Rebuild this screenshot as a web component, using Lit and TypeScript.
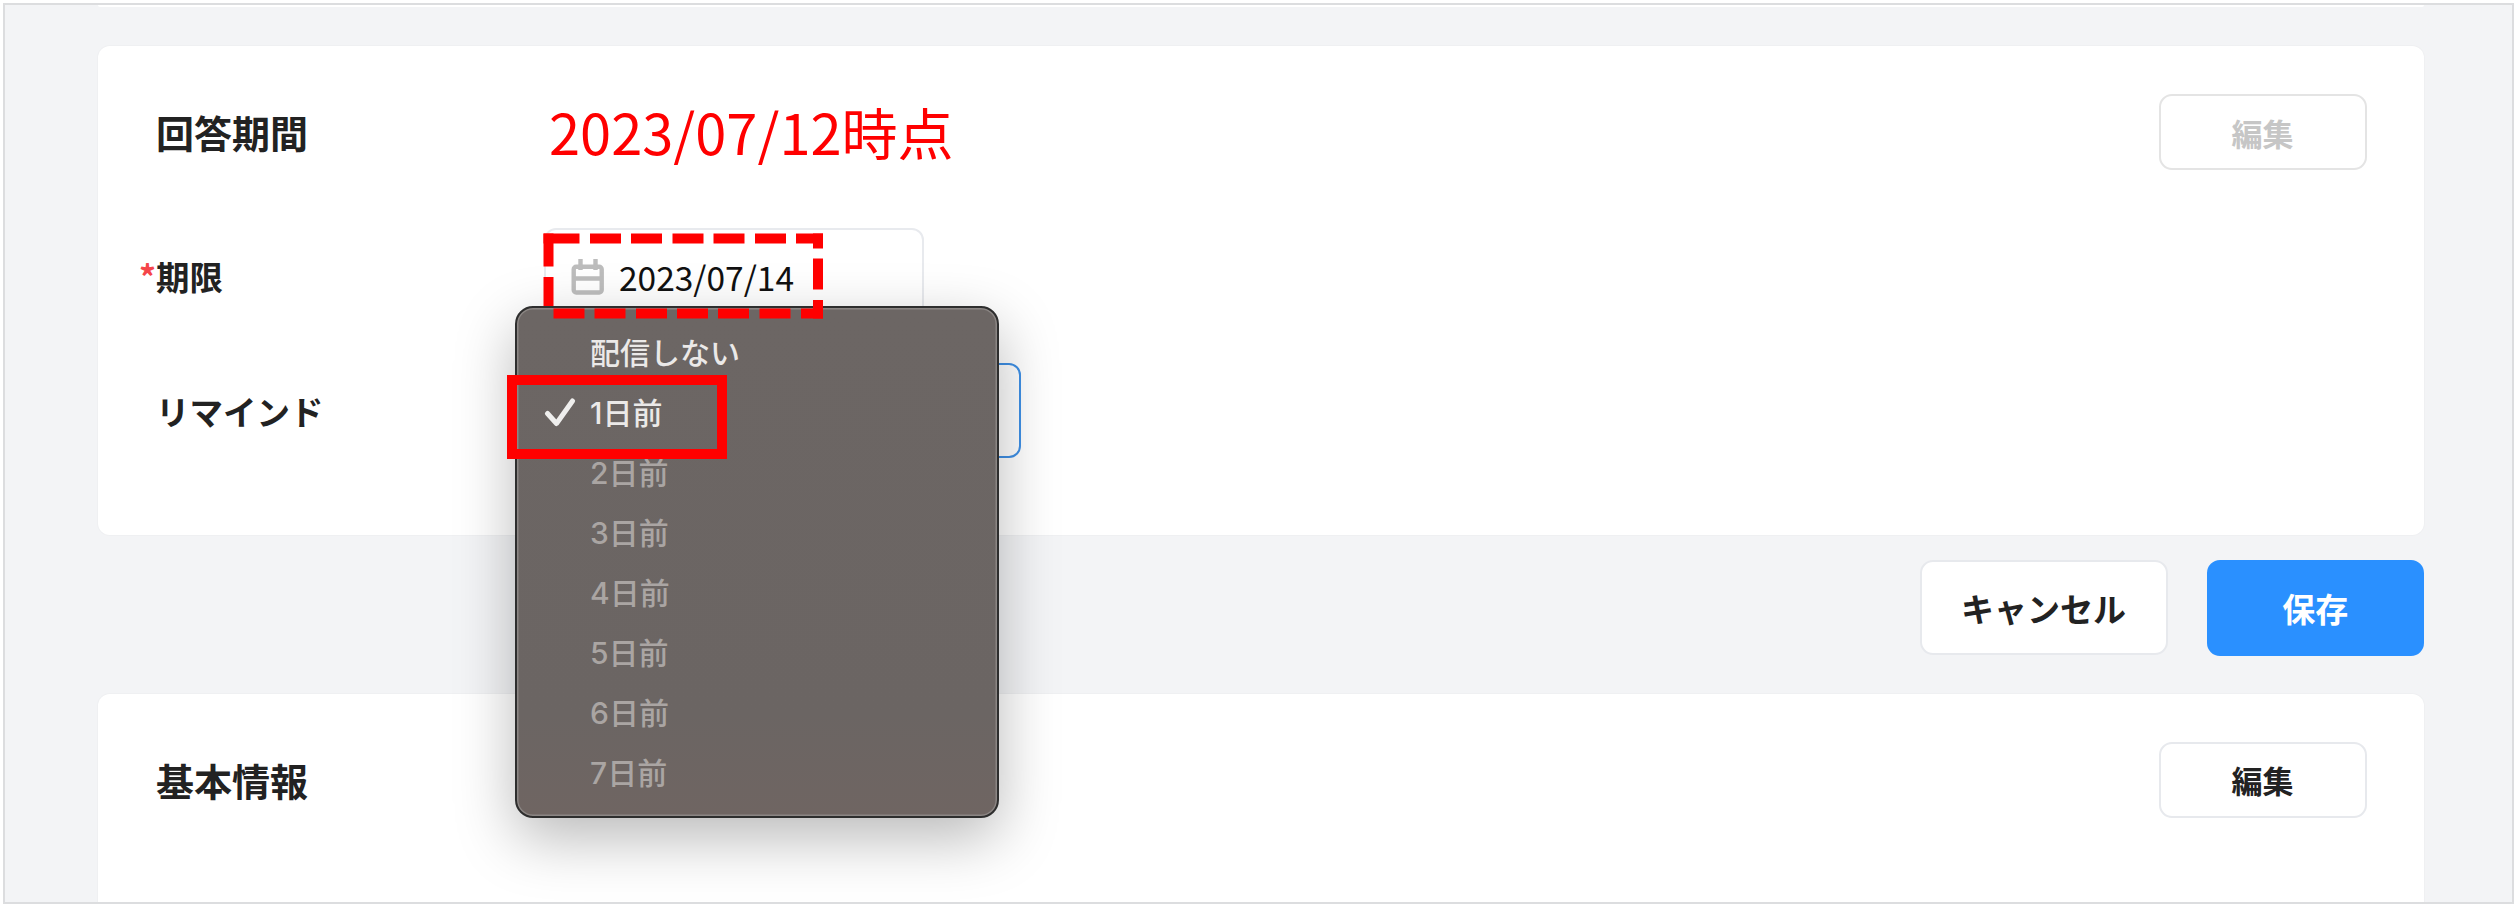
import { LitElement, html, css, svg } from "lit";
import { customElement } from "lit/decorators.js";

const JP = `"Noto Sans CJK JP", "Noto Sans", sans-serif`;
const OPTIONS = ["配信しない", "1日前", "2日前", "3日前", "4日前", "5日前", "6日前", "7日前"];

// Dashed annotation rectangle: [x, y, w, h] per dash, as measured in the reference.
const DASHES: [number, number, number, number][] = [
  [543.5, 233.5, 36, 10], [590, 233.5, 31, 10], [631, 233.5, 31, 10], [672.5, 233.5, 31, 10],
  [713.5, 233.5, 31, 10], [755, 233.5, 31, 10], [796, 233.5, 27, 10],
  [813, 233.5, 10, 15], [813, 258.5, 10, 31], [813, 300, 10, 18.5],
  [543.5, 233.5, 10, 33], [543.5, 277, 10, 29],
  [553.5, 308.5, 31, 10], [594.5, 308.5, 31, 10], [636, 308.5, 31, 10], [677, 308.5, 31, 10],
  [718, 308.5, 31, 10], [759.5, 308.5, 31, 10], [801, 308.5, 22, 10],
];

@customElement("app-root")
export class AppRoot extends LitElement {
  static styles = css`
    :host {
      display: block;
      position: relative;
      width: 2516px;
      height: 907px;
      overflow: hidden;
      background: #fff;
      font-family: ${css([JP] as unknown as TemplateStringsArray)};
    }
    .frame {
      box-sizing: border-box;
      width: 2510.5px;
      height: 900.5px;
      margin: 3px 0 0 3px;
      padding: 0 87.5px 0 93px;
      border: 2px solid #dcdddf;
      background: #f3f4f6;
      overflow: hidden;
    }
    .stub {
      height: 2px;
      background: #fff;
      border-radius: 0 0 8px 8px;
    }
    .card {
      box-sizing: border-box;
      background: #fff;
      border-radius: 12px;
      padding: 48px 57.5px 0 58px;
      box-shadow: 0 0 0 1px #eff0f2;
    }
    .card.first {
      margin-top: 39px;
      height: 489px;
    }
    .card.second {
      margin-top: 38px;
      height: 260px;
    }
    .head {
      display: flex;
      align-items: center;
      height: 76px;
    }
    .title {
      width: 388px;
      flex: none;
      font-size: 38px;
      line-height: 76px;
      font-weight: 700;
      color: #222;
    }
    .asof {
      flex: 1;
      margin-left: 5px;
      padding-bottom: 2px;
      font-size: 56px;
      line-height: 76px;
      color: #f00;
      white-space: nowrap;
    }
    .second .title { flex: 1; }
    .row {
      display: flex;
      align-items: center;
      height: 95px;
    }
    .row.date { margin-top: 58px; }
    .row.remind { margin-top: 40px; }
    .label {
      width: 388px;
      flex: none;
      font-size: 33.5px;
      font-weight: 700;
      color: #222;
      padding-bottom: 1px;
      box-sizing: border-box;
    }
    .req {
      color: #f5454a;
      display: inline-block;
      width: 16px;
      margin-left: -17px;
      margin-right: 1px;
    }
    .field {
      box-sizing: border-box;
      height: 95px;
      border-radius: 12px;
      background: #fff;
    }
    .field.date {
      width: 380px;
      border: 2px solid #e8eaee;
      display: flex;
      align-items: center;
      gap: 14px;
      padding: 0 0 0 25px;
      font-size: 33.5px;
      color: #111;
    }
    .field.date span { padding-top: 1px; }
    .field.date svg { flex: none; margin-top: 3px; }
    .field.select {
      width: 477px;
      border: 2px solid #3f90e6;
    }
    .btn {
      box-sizing: border-box;
      display: flex;
      align-items: center;
      justify-content: center;
      border-radius: 13px;
      background: #fff;
      border: 2px solid #e7e9ed;
      color: #222;
      font-weight: 700;
      font-size: 33px;
    }
    .btn.edit {
      width: 208px;
      height: 76px;
      font-size: 31px;
      flex: none;
    }
    .btn.off {
      color: #c6c6c6;
      border-color: #e4e4e4;
    }
    .actions {
      display: flex;
      justify-content: flex-end;
      align-items: flex-start;
      gap: 39px;
      margin-top: 24.5px;
    }
    .btn.cancel {
      width: 248px;
      height: 95px;
      margin-top: 0.5px;
    }
    .btn.save {
      width: 217.5px;
      height: 96px;
      background: #2a90ff;
      border-color: #2a90ff;
      color: #fff;
    }
    .menu {
      position: absolute;
      left: 515px;
      top: 306px;
      box-sizing: border-box;
      width: 484px;
      height: 512px;
      padding: 14.5px 0;
      border: 2px solid #2e2e2e;
      border-radius: 18px;
      background: linear-gradient(#6c6664, #6b6563 80%, #6f6562);
      box-shadow: inset 0 0 0 1.5px #8b8684, 0 20px 60px rgba(0, 0, 0, 0.28);
      font-family: Inter, ${css([JP] as unknown as TemplateStringsArray)};
      font-size: 30px;
      font-weight: 500;
    }
    .opt {
      position: relative;
      height: 60px;
      line-height: 60px;
      padding-left: 73px;
      color: #aaa5a3;
      white-space: nowrap;
    }
    .opt.on { color: #ebe9e8; }
    .check {
      position: absolute;
      left: 26.5px;
      top: 13px;
    }
    .box {
      position: absolute;
      left: 507px;
      top: 375px;
      box-sizing: border-box;
      width: 220px;
      height: 84px;
      border: 10px solid #f00;
    }
    .dashes {
      position: absolute;
      left: 0;
      top: 0;
    }
  `;

  render() {
    return html`
      <div class="frame">
        <div class="stub"></div>
        <section class="card first">
          <div class="head">
            <div class="title">回答期間</div>
            <div class="asof">2023/07/12時点</div>
            <div class="btn edit off">編集</div>
          </div>
          <div class="row date">
            <div class="label"><span class="req">*</span>期限</div>
            <div class="field date">
              <svg width="34" height="36" viewBox="0 0 34 36" fill="none" stroke="#bdbdbd" stroke-width="4.4">
                <rect x="2.7" y="7.7" width="28" height="25.8" rx="2.5"></rect>
                <path d="M2 19.5h30M9.5 0v11M24.5 0v11"></path>
              </svg>
              <span>2023/07/14</span>
            </div>
          </div>
          <div class="row remind">
            <div class="label">リマインド</div>
            <div class="field select"></div>
          </div>
        </section>
        <div class="actions">
          <div class="btn cancel">キャンセル</div>
          <div class="btn save">保存</div>
        </div>
        <section class="card second">
          <div class="head">
            <div class="title">基本情報</div>
            <div class="btn edit">編集</div>
          </div>
        </section>
      </div>
      <div class="menu">
        ${OPTIONS.map(
          (o, i) => html`
            <div class="opt ${i < 2 ? "on" : ""}">
              ${i === 1
                ? html`<svg class="check" width="32" height="32" viewBox="0 0 32 32" fill="none" stroke="#efeeed" stroke-width="5" stroke-linecap="round" stroke-linejoin="round">
                    <path d="M3.5 17.5 12.5 27.5 28.5 5"></path>
                  </svg>`
                : ""}${o}
            </div>
          `
        )}
      </div>
      <div class="box"></div>
      <svg class="dashes" width="2516" height="907">
        ${DASHES.map(([x, y, w, h]) => svg`<rect x=${x} y=${y} width=${w} height=${h} fill="#f00"></rect>`)}
      </svg>
    `;
  }
}
